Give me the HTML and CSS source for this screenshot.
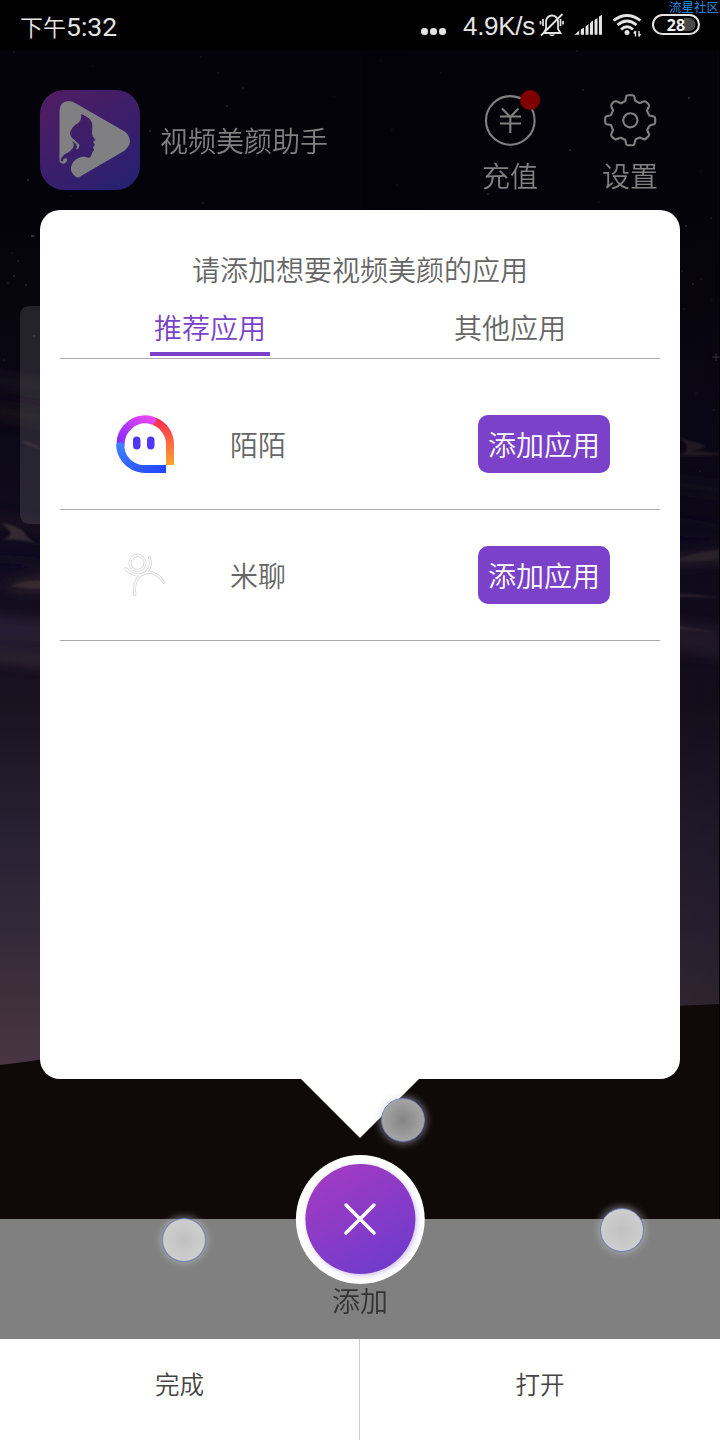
FILE: index.html
```html
<!DOCTYPE html>
<html lang="zh-CN">
<head>
<meta charset="utf-8">
<title>视频美颜助手</title>
<link rel="stylesheet" href="styles.css">
</head>
<body>
<div class="screen">
  <svg class="sky" viewBox="0 0 720 1440" aria-hidden="true">
    <defs>
      <linearGradient id="night" x1="0" y1="0" x2="0" y2="1080" gradientUnits="userSpaceOnUse">
        <stop offset="0" stop-color="#040309"/><stop offset=".2" stop-color="#040309"/>
        <stop offset=".36" stop-color="#0a0814"/><stop offset=".52" stop-color="#110c20"/>
        <stop offset=".65" stop-color="#19121f"/><stop offset=".78" stop-color="#292234"/>
        <stop offset=".86" stop-color="#342939"/><stop offset=".96" stop-color="#45333f"/><stop offset="1" stop-color="#4a3545"/>
      </linearGradient>
      <linearGradient id="shade" x1="0" x2="1"><stop offset=".5" stop-color="#080510" stop-opacity="0"/><stop offset="1" stop-color="#080510" stop-opacity=".3"/></linearGradient>
      <filter id="soft" filterUnits="userSpaceOnUse" x="-60" y="300" width="840" height="760"><feGaussianBlur stdDeviation="9 6"/></filter>
      <filter id="wisp" filterUnits="userSpaceOnUse" x="-60" y="300" width="840" height="760"><feGaussianBlur stdDeviation="1.2"/></filter>
    </defs>
    <rect width="720" height="1440" fill="url(#night)"/>
    <g filter="url(#soft)" opacity=".6">
      <path d="M-20 368L54 382V398L-20 384Z" fill="#1d1420"/>
      <path d="M-20 400L54 412V430L-20 415Z" fill="#1a121c"/>
      <path d="M-20 512L54 522V532L-20 526Z" fill="#21171f"/>
      <path d="M-20 552L54 558V568L-20 562Z" fill="#100e20"/>
      <path d="M10 582L54 576V591H10Z" fill="#493636"/>
      <path d="M-20 615L54 620V648L-20 645Z" fill="#31283c"/>
      <path d="M-20 648L54 654V668L-20 660Z" fill="#42303e"/>
      <path d="M666 475L740 487V500L666 490Z" fill="#191320"/>
      <path d="M666 515L740 528V541L666 535Z" fill="#100d20"/>
      <path d="M666 557L740 550V561L666 565Z" fill="#554345"/>
      <path d="M666 620L740 630V660L666 650Z" fill="#392b3c"/>
    </g>
    <g filter="url(#wisp)">
      <path d="M0 523Q17 525 24 532Q29 541 41 546Q24 538 0 540Q21 535 0 523Z" fill="#514141" opacity=".55"/>
      <path d="M678 437Q690 441 706 446Q698 452 680 450L720 453V455L678 456Q696 449 678 437Z" fill="#433338" opacity=".6"/>
      <path d="M20 441Q32 441 42 449Q28 447 20 441Z" fill="#3b2a32" opacity=".6"/>
      <path d="M678 594Q700 594 720 598Q703 597 678 597ZM678 626L720 633L678 629Z" fill="#544348" opacity=".6"/>
      <path d="M10 586Q24 580 42 581V589Q24 588 10 586Z" fill="#493636" opacity=".5"/>
      <path d="M678 559Q700 550 720 550V559Q700 562 678 561Z" fill="#4a3c3e" opacity=".5"/>
    </g>
    <rect width="720" height="1060" fill="url(#shade)"/>
    <path d="M0 1065Q26 1062 44 1059L360 1030L676 1006L720 1004V1440H0Z" fill="#0f0909"/>
    <path d="M719.5 50V1219" stroke="#010102"/>
    <g fill="#787985" opacity=".3">
      <circle cx="14" cy="52" r=".7"/><circle cx="201" cy="57" r=".8"/><circle cx="93" cy="66" r=".5"/><circle cx="381" cy="61" r=".5"/><circle cx="577" cy="51" r=".7"/><circle cx="441" cy="73" r=".7"/><circle cx="218" cy="73" r=".7"/><circle cx="243" cy="88" r=".8"/><circle cx="227" cy="106" r=".9"/><circle cx="334" cy="96" r=".6"/><circle cx="392" cy="130" r=".6"/><circle cx="150" cy="131" r="1.1"/><circle cx="28" cy="180" r="1.2"/><circle cx="71" cy="196" r=".6"/><circle cx="203" cy="203" r=".8"/><circle cx="397" cy="185" r=".6"/><circle cx="488" cy="194" r="1"/><circle cx="570" cy="150" r="1.1"/><circle cx="583" cy="90" r=".9"/><circle cx="689" cy="98" r="1.2"/><circle cx="701" cy="171" r=".5"/><circle cx="599" cy="202" r=".6"/><circle cx="32" cy="236" r="1.2"/><circle cx="12" cy="253" r=".7"/><circle cx="18" cy="261" r=".8"/><circle cx="8" cy="283" r=".8"/><circle cx="26" cy="285" r="1"/><circle cx="14" cy="276" r=".9"/><circle cx="4" cy="360" r=".7"/><circle cx="34" cy="336" r=".9"/><circle cx="686" cy="226" r="1"/><circle cx="711" cy="218" r=".8"/><circle cx="682" cy="271" r=".8"/><circle cx="701" cy="279" r=".7"/><circle cx="693" cy="284" r="1"/><circle cx="712" cy="300" r=".6"/><circle cx="684" cy="309" r=".7"/><circle cx="696" cy="393" r=".6"/><circle cx="714" cy="410" r=".7"/><circle cx="700" cy="471" r=".8"/>
    </g>
    <path d="M716 353V361M712 357H720M31 236H35" stroke="#777780" stroke-width=".7" opacity=".55"/>
    <path d="M50 306H30Q20 306 20 316V514Q20 524 30 524H50Z" fill="#818087" fill-opacity=".23"/>
  </svg>

  <header class="status">
    <span class="clock">下午<b>5:32</b></span>
    <span class="more"><i></i><i></i><i></i></span>
    <span class="speed">4.9K/s</span>
    <svg class="status-icons" viewBox="539 0 165 50" fill="none" stroke="#e4e4e4" stroke-width="1.8">
      <path d="M543.5 33H560.5L558 29V21C557 17 554 15.500 552 15.500C550 15.500 547 17 546 21V29ZM562.500 14L541 35.500"/>
      <path d="M549 34.500H555Q554 36 552 36Q550 36 549 34.500Z" fill="#e4e4e4" stroke="none"/>
      <path d="M543 19V26M540.500 21V24.500M560.500 19V26M563 21V24.500" stroke-width="1.7"/>
      <path d="M574.500 34.700L579.200 30.500V34.700ZM580.800 29.500L584 27.500V34.700H580.800ZM585.500 26.500L588.500 24V34.700H585.500ZM590 23L593 20.500V34.700H590ZM594.500 20L597.500 18V34.700H594.500ZM599 16.500L602 14.700V34.700H599Z" fill="#e4e4e4" stroke="none"/>
      <path d="M613.500 20.500Q627 10.500 640.500 20.500M617.500 25Q627 17 636.500 25M621 29.500Q627 24 633 29.500" stroke-width="2.700"/>
      <circle cx="627" cy="32.500" r="2.500" fill="#e4e4e4" stroke="none"/>
      <path d="M635.500 31V36.500M633.800 33.500L635.500 31M639 31V36.500M640.500 34L639 36.500" stroke-width="1.4"/>
      <path d="M684 18H689A6.500 6.500 0 0 1 689 31H684Z" fill="#4a4a4a" stroke="none"/>
      <rect x="653" y="14.900" width="46" height="19.200" rx="9.600" stroke-width="2"/>
      <text class="battery" x="676" y="30.700" text-anchor="middle">28</text>
    </svg>
    <span class="watermark">流星社区</span>
  </header>

  <section class="appbar">
    <svg class="logo" viewBox="0 0 100 100">
      <defs><linearGradient id="logo-fill" x1=".1" y1="0" x2=".8" y2="1"><stop offset="0" stop-color="#501d62"/><stop offset="1" stop-color="#292071"/></linearGradient></defs>
      <rect width="100" height="100" rx="24" fill="url(#logo-fill)"/>
      <path d="M19.500 21Q20 11 29 11Q32 11 36 13.500L82 40Q89 43 90 51Q90 56 84 61L41 86Q38 89 35 86Q30 82 31 77Q33 68 44 66.500Q50 69 51 66L52.500 62L54 60L53 57L55 55L53 52L55.500 50Q52 46 52 43Q54 30 47 27Q44 25 41 24Q43 31 35 35Q27 42 32 48Q38 53 39.500 55Q39 60 36 59Q39 54 31.500 51Q35 54 33 58Q30 62 25 64Q20 68 21 71Q23 73 23.500 69Q28 67 27 71Q25 75 21 73Q19 72 19.500 70Z" fill="#808083"/>
    </svg>
    <h1 class="app-name">视频美颜助手</h1>
    <div class="action">
      <svg class="action-icon" viewBox="0 0 60 60" fill="none" stroke="#808080" stroke-width="2.100">
        <circle cx="30.300" cy="30.400" r="24.300"/>
        <path d="M22 18.500L30.300 27L38.500 18.500M20 26.500H41M20 33.500H41M30.300 26.500V43"/>
        <circle cx="50" cy="10" r="10" fill="#800000" stroke="none"/>
      </svg>
      <span>充值</span>
    </div>
    <div class="action">
      <svg class="action-icon" viewBox="0 0 60 60" fill="none" stroke="#808080" stroke-width="2.100" stroke-linejoin="round">
        <path d="M26.300 6Q26.500 5.200 28 5.200H32.500Q34 5.200 34.300 6.500L35 10.500Q36 11.500 39.500 13Q41 13 42 12L45 11.200Q46 11.500 48.500 14Q49.500 15.500 48.500 17.500L47 20.500Q47.500 23 49.500 25.500L54 26.500Q55.200 27 55.200 28.500V32.500Q55.200 34 54 34.300L49.800 35.500Q48.500 37 47.300 40.200L48.800 43.500Q49.500 45.500 48 46.800Q46 49 44.700 49.500L42 48.500Q40.500 47.500 39 47.700L35.500 49.500L34.400 54Q34 55.200 32.500 55.200H28Q26.600 55.200 26.200 54L25.300 50L21 47.800Q19.500 47.500 18 48.800L15.500 49.500Q14 49 11.800 46.500Q10.600 45 11.700 43L13 40L11 35L6.500 34.300Q5.200 34 5.200 32.500V28Q5.200 26.500 6.500 26.200L10.500 25.300Q12 24 13 20L11.500 17Q10.700 15 12.500 13Q14 11.200 15.500 11.200L18.500 12Q20 13.500 21.500 13L25.300 11Z"/>
        <circle cx="30.300" cy="30.300" r="7.100"/>
      </svg>
      <span>设置</span>
    </div>
  </section>

  <main class="dialog">
    <h2 class="dialog-title">请添加想要视频美颜的应用</h2>
    <nav class="tabs"><span class="tab active">推荐应用</span><span class="tab">其他应用</span></nav>
    <div class="row first">
      <svg class="app-icon" viewBox="0 -1 70 70" fill="none" stroke-width="8">
        <defs>
          <linearGradient id="mm-red" x1="0" y1="0" x2="0" y2="1"><stop stop-color="#fb3152"/><stop offset="1" stop-color="#fda52d"/></linearGradient>
          <linearGradient id="mm-violet" x1="0" y1="1" x2="1" y2="0"><stop stop-color="#8529fb"/><stop offset="1" stop-color="#e747f6"/></linearGradient>
          <linearGradient id="mm-blue" x1="0" y1="0" x2="1" y2="1"><stop stop-color="#4286ff"/><stop offset="1" stop-color="#2442fb"/></linearGradient>
        </defs>
        <path d="M44 11.200A24.800 24.800 0 0 1 60 34V55" stroke="url(#mm-red)"/>
        <path d="M10.500 35A25 25 0 0 1 42 10.300" stroke="url(#mm-violet)" stroke-linecap="round"/>
        <path d="M6.200 35A4.200 4.200 0 0 1 14.300 35C14.300 47 24 55 34 55H56V63H35C19 63 6.200 49 6.200 35Z" fill="url(#mm-blue)"/>
        <rect x="23" y="26.500" width="7.500" height="13" rx="3.700" fill="#5038f3"/><rect x="37" y="26.500" width="7.500" height="13" rx="3.700" fill="#5038f3"/>
      </svg>
      <span class="row-name">陌陌</span><button class="add">添加应用</button>
    </div>
    <div class="row">
      <svg class="app-icon" viewBox="0 0 70 70" fill="none" stroke-linecap="round">
        <g stroke="#d8d8d8" stroke-width="3"><circle cx="27.500" cy="23" r="7.500"/><path d="M16 28.500Q20 34 27.500 35C36 35 43 28 39.500 17.500M25 54.500C21 33 43 24 53.700 42.500"/></g>
        <g stroke="#fff" stroke-width="1.300"><circle cx="27.500" cy="23" r="7.500"/><path d="M16 28.500Q20 34 27.500 35C36 35 43 28 39.500 17.500M25 54.500C21 33 43 24 53.700 42.500"/></g>
      </svg>
      <span class="row-name">米聊</span><button class="add">添加应用</button>
    </div>
    <svg class="pointer" viewBox="0 0 120 60"><path d="M0 0H120L60 60Z" fill="#fff"/></svg>
  </main>

  <section class="dock">
    <svg class="close" viewBox="0 0 130 130">
      <defs><linearGradient id="close-fill" x1=".15" y1=".1" x2=".7" y2="1"><stop stop-color="#a03bc2"/><stop offset="1" stop-color="#703bcc"/></linearGradient><filter id="glow"><feGaussianBlur stdDeviation="2.500"/></filter></defs>
      <circle cx="65.300" cy="65.500" r="64.400" fill="#fff"/><circle cx="67" cy="67" r="55" fill="#d1c2f0" filter="url(#glow)"/><circle cx="65.400" cy="65" r="55" fill="url(#close-fill)"/>
      <path d="M51 51L79 79M79 51L51 79" stroke="#fff" stroke-width="3.500" stroke-linecap="round"/>
    </svg>
    <span class="dock-label">添加</span>
  </section>
  <footer class="footer"><span>完成</span><span>打开</span></footer>

  <i class="touch upper"></i><i class="touch left"></i><i class="touch right"></i>
</div>
</body>
</html>
```
FILE: styles.css
```css
* { box-sizing: border-box; }
body { margin: 0; background: #0f0909; font-family: "Noto Sans CJK SC", sans-serif; font-weight: 350; }
.screen { position: relative; display: flex; flex-direction: column; width: 720px; height: 1440px; overflow: hidden; font-size: 28px; }
.sky { position: absolute; inset: 0; width: 720px; height: 1440px; }
.status, .appbar, .dialog, .dock, .footer { position: relative; flex: none; }
.status { display: flex; align-items: center; height: 50px; padding-left: 20px; background: #000; color: #e4e4e4; }
.clock { width: 401px; font-size: 23px; line-height: 50px; padding-top: 2px; white-space: nowrap; }
.clock b { font: 26.500px/50px Roboto, sans-serif; }
.more { display: flex; width: 42px; gap: 2.500px; padding-top: 13px; }
.more i { width: 6.500px; height: 6.500px; border-radius: 50%; background: #e4e4e4; }
.speed { width: 76px; font: 26px/50px "Liberation Sans", sans-serif; padding-top: 2px; letter-spacing: -.3px; white-space: nowrap; }
.status-icons { width: 165px; height: 50px; flex: none; }
.battery { font: 700 16px "Noto Sans", sans-serif; fill: #eee; stroke: none; }
.watermark { position: absolute; right: 1px; top: 0; font-size: 12.500px; line-height: 13px; color: #2898f2; white-space: nowrap; }
.appbar { display: flex; height: 160px; padding: 40px 30px 0 40px; color: #808080; }
.logo { width: 100px; height: 100px; flex: none; }
.app-name { width: 310px; margin: 0; padding-left: 20px; font-size: 28px; font-weight: inherit; line-height: 100px; }
.action { display: flex; flex-direction: column; flex: none; align-items: center; width: 120px; line-height: 50px; }
.action-icon { width: 60px; height: 60px; flex: none; }
.dialog { display: flex; flex-direction: column; height: 869px; margin: 0 40px; padding: 40px 20px 0; border-radius: 20px; background: #fff; color: #666; }
.dialog-title { margin: 0; font-size: 28px; font-weight: inherit; line-height: 39px; text-align: center; }
.tabs { display: flex; justify-content: space-around; height: 70px; padding-top: 7px; border-bottom: 1px solid #aaa; }
.tab { width: 120px; height: 60px; padding-top: 9px; line-height: 44px; text-align: center; border-bottom: 4px solid transparent; }
.active { color: #7b42c9; border-color: #7b42c9; }
.row { display: flex; align-items: center; height: 131px; padding: 0 50px; border-bottom: 1px solid #aaa; }
.first { height: 151px; padding-top: 20px; }
.app-icon { width: 70px; height: 70px; }
.row-name { flex: 1; padding-left: 50px; line-height: 50px; }
.add { width: 132px; height: 58px; padding: 0; border: 0; border-radius: 10px; background: #7b42c9; color: #fff; font: inherit; line-height: 58px; }
.pointer { position: absolute; left: 260px; top: 868px; width: 120px; height: 60px; }
.dock { display: flex; flex-direction: column; align-items: center; height: 120px; margin-top: 140px; background: #808080; color: #333; }
.close { width: 130px; height: 130px; margin-top: -65px; flex: none; }
.dock-label { line-height: 33px; }
.footer { display: flex; height: 101px; background: #fff; color: #444; font-size: 24.500px; line-height: 89px; text-align: center; }
.footer span { width: 360px; }
.footer span:first-child { border-right: 1px solid #ccc; }
.touch { position: absolute; width: 44px; height: 44px; border-radius: 50%; border: 1px solid #7582b9; background: radial-gradient(circle, #c0c0c0, #d4d4d4); box-shadow: 0 0 7px 2px rgba(205, 205, 215, .45); }
.upper { left: 381px; top: 1098px; background: radial-gradient(circle, #858585, #b1b1b1); }
.left { left: 162px; top: 1218px; }
.right { left: 600px; top: 1208px; }
```
